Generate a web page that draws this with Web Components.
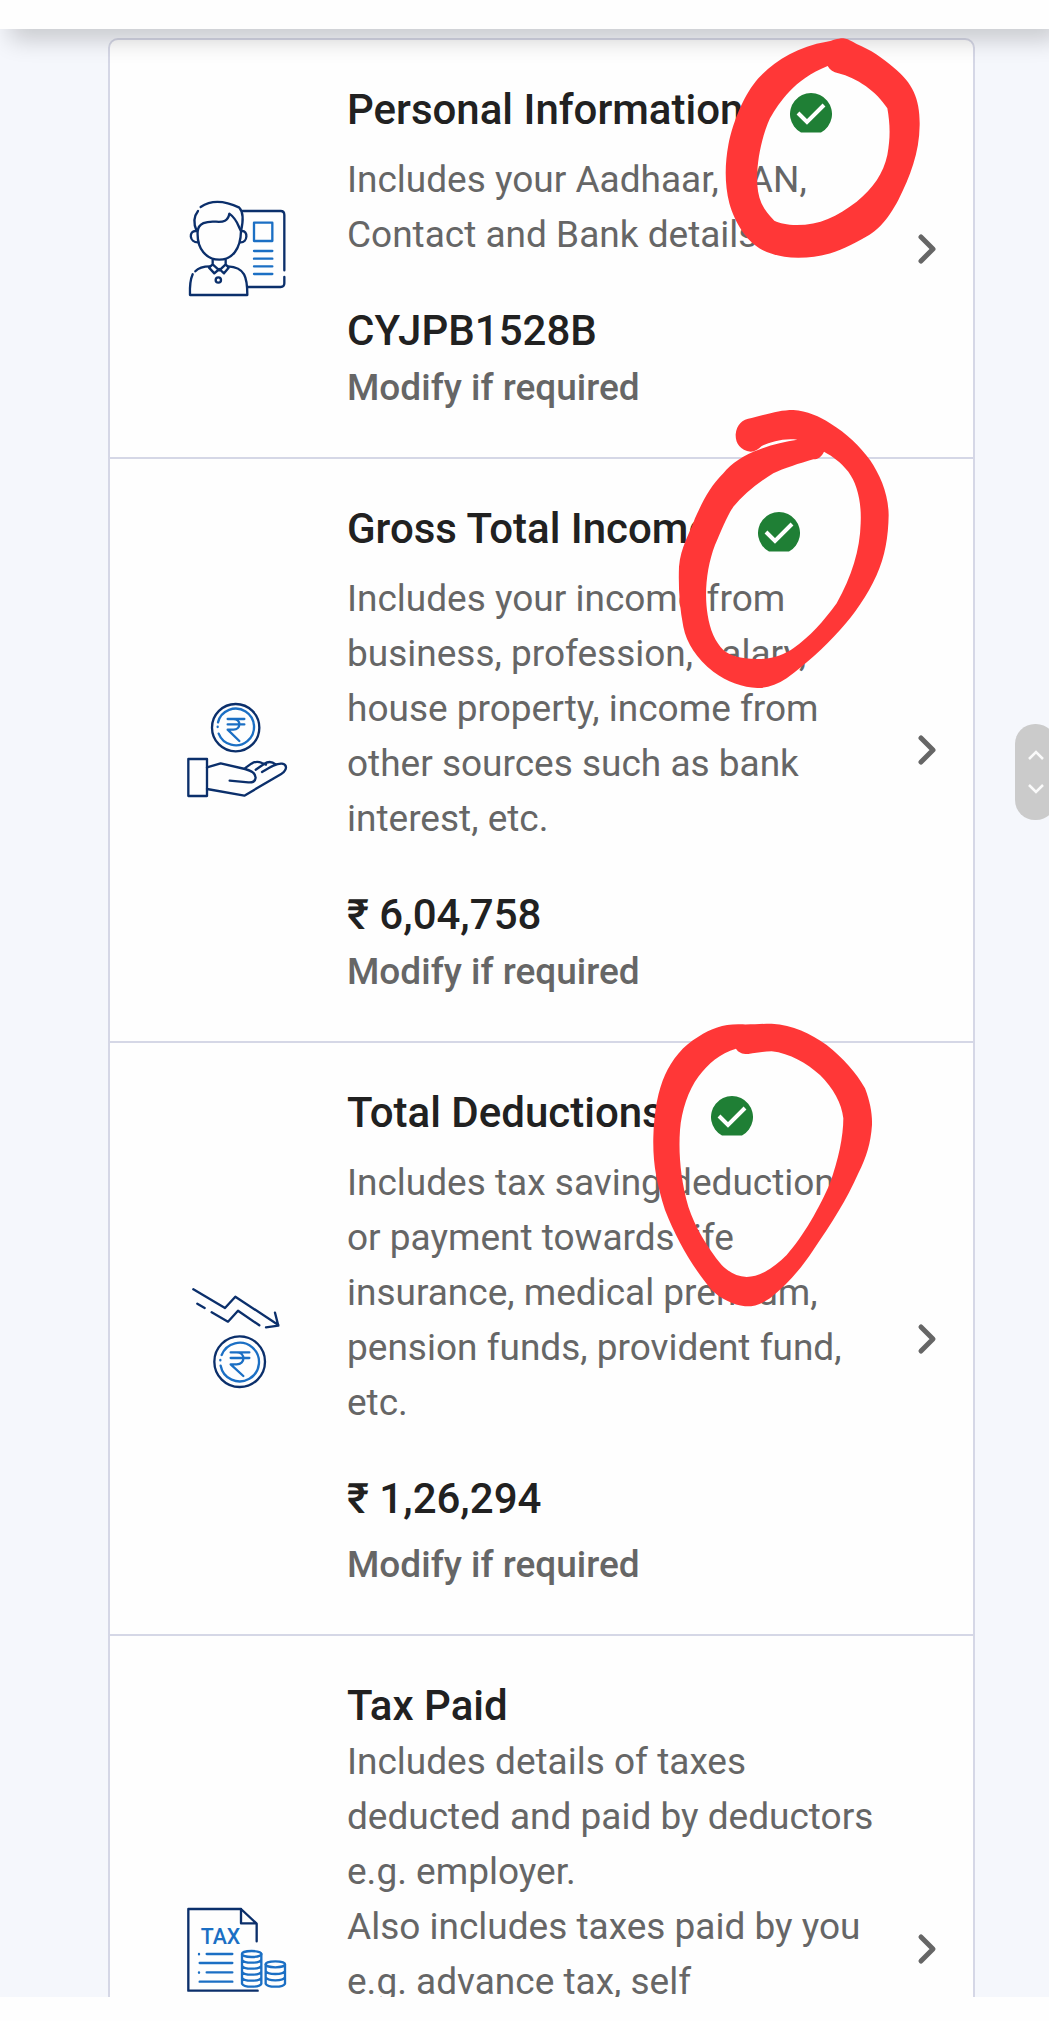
<!DOCTYPE html>
<html lang="en">
<head>
<meta charset="utf-8">
<meta name="viewport" content="width=device-width, initial-scale=1">
<title>Return summary</title>
<style>
  body { margin: 0; background: #fefefe; font-family: Roboto, "Liberation Sans", sans-serif; color: #212121; }
</style>
</head>
<body>
<return-page>
  <summary-card heading="Personal Information" done value="CYJPB1528B" note="Modify if required">
    <person-icon slot="icon"></person-icon>
    Includes your Aadhaar, PAN, Contact and Bank details
  </summary-card>
  <summary-card heading="Gross Total Income" done value="₹ 6,04,758" note="Modify if required">
    <income-icon slot="icon"></income-icon>
    Includes your income from business, profession, salary, house property, income from other sources such as bank interest, etc.
  </summary-card>
  <summary-card heading="Total Deductions" done spaced value="₹ 1,26,294" note="Modify if required">
    <deduction-icon slot="icon"></deduction-icon>
    Includes tax saving deduction<br>or payment towards life insurance, medical premium, pension funds, provident fund, etc.
  </summary-card>
  <summary-card heading="Tax Paid" tall>
    <tax-icon slot="icon"></tax-icon>
    Includes details of taxes deducted and paid by deductors e.g. employer.<br>Also includes taxes paid by you e.g. advance tax, self
  </summary-card>
  <marker-rings slot="overlay"></marker-rings>
  <scroll-pill slot="overlay"></scroll-pill>
</return-page>

<script>
const define = (name, html, setup) => customElements.define(name, class extends HTMLElement {
  constructor() {
    super();
    this.attachShadow({ mode: "open" }).innerHTML = html;
  }
  connectedCallback() { if (setup) setup(this, this.shadowRoot); }
});

const iconStyle = `<style>
  :host { display: block; }
  svg { display: block; width: 100px; height: 100px; overflow: visible; fill: none; stroke: #0b2f6b; stroke-width: 7; stroke-linecap: round; stroke-linejoin: round; }
  .b { stroke: #1b6fc4; }
</style>`;

define("return-page", `<style>
  :host { display: flex; flex-direction: column; height: 100vh; position: relative; overflow: hidden; }
  header { flex: 0 0 29px; background: #fefefe; position: relative; z-index: 2; box-shadow: 10px 10px 24px rgba(0,0,0,.2); }
  main { flex: 1 1 0; min-height: 0; overflow: hidden; background: #f5f7fc; padding: 9px 74px 0 108px; }
  .list { border: 2px solid #d5d7e6; border-radius: 10px; background: #fefefe; box-sizing: border-box; }
  footer { flex: 0 0 24px; background: #fefefe; }
</style>
<header></header>
<main><div class="list"><slot></slot></div></main>
<footer></footer>
<slot name="overlay"></slot>`);

define("summary-card", `<style>
  :host { display: flex; align-items: center; gap: 37px; padding: 42px 36px 42px 77px; border-bottom: 2px solid #d5d7e6; }
  :host([tall]) { box-sizing: border-box; min-height: 626px; border-bottom: 0; }
  .text { flex: 1; min-width: 0; align-self: stretch; margin-left: 23px; }
  .head { display: flex; align-items: flex-end; gap: 47px; margin-bottom: 15px; }
  :host([tall]) .head { margin-bottom: 1px; }
  h2, .value { margin: 0; font-size: 42px; line-height: 55px; font-weight: 500; }
  .desc, .note { margin: 0; font-size: 37px; line-height: 55px; color: #666; }
  .value { margin-top: 41px; }
  .note { font-weight: 500; margin-top: 2px; }
  :host([spaced]) .note { margin-top: 11px; }
  .check { width: 42px; height: 40px; margin-bottom: 4px; display: none; }
  :host([done]) .check { display: block; }
  button { flex: none; width: 20px; height: 32px; padding: 0; border: 0; background: none; cursor: pointer; }
  button svg { display: block; overflow: visible; }
</style>
<slot name="icon"></slot>
<div class="text">
  <div class="head"><h2></h2>
    <svg class="check" viewBox="0 0 42 40" aria-hidden="true"><path d="M11 39.500A21 21 0 1 1 31 39.500Z" fill="#1f7f35"/><path d="M8 20l9 9L34 12" fill="none" stroke="#fff" stroke-width="4"/></svg>
  </div>
  <p class="desc"><slot></slot></p>
</div>
<button type="button"><svg width="20" height="32" viewBox="0 0 20 32"><path d="M4 4l12 12L4 28" fill="none" stroke="#666" stroke-width="5" stroke-linecap="round" stroke-linejoin="round"/></svg></button>`,
(el, root) => {
  root.querySelector("h2").textContent = el.getAttribute("heading");
  root.querySelector("button").setAttribute("aria-label", el.getAttribute("heading"));
  for (const key of ["value", "note"]) {
    if (!el.hasAttribute(key) || root.querySelector("." + key)) continue;
    const p = document.createElement("p");
    p.className = key;
    p.textContent = el.getAttribute(key);
    if (key === "value") p.style.marginBottom = "0";
    root.querySelector(".text").append(p);
  }
});

define("person-icon", iconStyle + `<svg viewBox="51 54 300 300" aria-hidden="true">
  <path d="M217 90H332Q343 90 343 102V268M343 288V307Q343 318 332 318H234"/>
  <path d="M92 78C125 55 165 59 208 80C219 92 220 120 213 150M84 90C70 108 71 130 80 150"/>
  <path d="M83 152C80 205 110 236 148 236S212 205 213 150C204 135 202 115 178 98C174 120 160 124 138 122C110 120 84 126 83 152Z"/>
  <path d="M79 150C55 148 57 185 85 184M215 150C235 148 234 185 211 184"/>
  <path d="M128 236V250L148 268L167 250V236M128 250L117 260L133 277L148 264L162 277L176 260L167 250"/>
  <path d="M120 256C98 256 84 262 76 271M68 280C60 298 59 318 60 342H232C232 290 225 258 174 256"/>
  <circle cx="145" cy="297" r="8"/>
  <g class="b"><rect x="252" y="125" width="55" height="55"/><path d="M252 210H307M252 233H307M252 256H307M252 279H307"/></g>
</svg>`);

define("income-icon", iconStyle + `<svg viewBox="51 31 300 300" aria-hidden="true">
  <circle cx="197" cy="114" r="71"/>
  <g class="b"><path d="M144 98A55 55 0 1 1 146 132M143 111v1"/><path d="M173 88H223M173 104H223M190 88C214 88 214 120 190 120H173L208 154"/></g>
  <rect x="55" y="208" width="56" height="111"/>
  <path d="M111 233L152 221L225 238C245 243 257 253 257 264C256 276 247 279 235 278L179 273M111 298L223 318L335 252C354 238 350 224 336 222C320 220 300 232 276 247M223 237L244 222C255 215 265 215 276 220L288 225M257 240L282 223C295 214 307 216 317 224"/>
</svg>`);

define("deduction-icon", iconStyle + `<svg viewBox="51 60 300 300" aria-hidden="true">
  <path d="M70 61L165 117L196 83L325 168M315 131L325 170L288 175M82 104L104 117M125 130L174 158L204 125L268 169"/>
  <circle cx="209" cy="278" r="76"/>
  <g class="b"><path d="M155 258A58 58 0 1 1 152 290M151 273v1"/><path d="M182 250H238M182 267H238M200 250C227 250 227 286 200 286H182L220 321"/></g>
</svg>`);

define("tax-icon", iconStyle + `<style>text { font: 500 64px Roboto, sans-serif; fill: #1b6fc4; stroke: none; }</style>
<svg viewBox="51 30 300 300" aria-hidden="true">
  <path d="M263 305H55V60H213L260 104V157M213 60V103H259"/>
  <text x="92" y="164">TAX</text>
  <g class="b"><path d="M87 195v1M110 195H187M89 222H187M87 250v1M110 250H187M89 278H187"/>
  <ellipse cx="245" cy="195" rx="29" ry="9"/><path d="M216 195V284Q220 293 245 293T274 284V195M216 212Q220 221 245 221T274 212M216 230Q220 239 245 239T274 230M216 248Q220 257 245 257T274 248M216 266Q220 275 245 275T274 266"/>
  <ellipse cx="316" cy="226" rx="29" ry="9"/><path d="M287 226V284Q291 293 316 293T345 284V226M287 246Q291 255 316 255T345 246M287 265Q291 274 316 274T345 265"/></g>
</svg>`);

define("marker-rings", `<style>
  :host { position: absolute; top: 0; left: 0; z-index: 3; pointer-events: none; }
  svg { display: block; overflow: visible; fill: #ff3737; fill-rule: evenodd; }
</style>
<svg width="1049" height="1400" viewBox="0 0 3147 4200" aria-hidden="true">
  <path transform="translate(2040 90)" d="M490 25C510 28 520 38 530 42C570 58 610 85 640 112C700 160 720 210 719 285C718 370 690 440 655 510C620 575 590 605 545 628C480 665 430 683 355 683C310 683 280 675 247 660C200 635 165 580 148 520C133 460 135 400 145 345C160 270 195 190 235 145C280 95 350 50 440 35C460 32 470 25 490 25ZM443 108C450 120 460 127 475 130C530 143 590 185 622 235C630 280 632 320 622 375C610 430 580 475 530 515C470 560 420 585 350 585C320 584 300 580 283 572C250 540 235 510 232 465C228 400 245 320 270 265C300 215 340 150 443 108Z"/>
  <path transform="translate(1980 1200)" d="M272 155C240 150 226 130 227 103C230 75 245 58 275 54C330 40 360 30 400 30C440 32 480 50 510 70C560 100 600 140 630 180C660 225 685 280 686 345C685 410 675 470 650 525C620 590 585 640 540 690C490 745 440 790 380 835C350 855 320 865 292 864C250 862 200 845 160 815C110 775 80 730 70 680C58 620 55 560 57 500C62 440 90 400 105 355C130 300 150 260 190 220C215 190 250 165 300 148C335 133 375 125 412 119C370 114 335 125 305 138C295 148 285 155 272 155ZM492 155C485 170 475 178 460 178C420 190 370 205 340 220C290 250 250 285 220 320C200 350 185 390 165 435C140 500 132 580 143 645C150 690 165 725 190 750C210 768 240 775 290 777C340 778 370 765 400 745C450 710 490 665 530 610C575 530 600 450 602 370C605 300 590 250 565 215C540 185 520 170 492 155Z"/>
  <path transform="translate(1920 3030)" d="M300 43C340 44 360 41 395 41C460 45 510 70 560 105C610 145 650 190 675 235C690 275 697 310 696 345C692 400 680 440 655 490C620 570 575 640 520 720C480 780 440 825 390 865C360 885 340 890 315 889C280 885 240 865 215 840C160 775 110 690 75 600C50 520 38 460 40 380C42 300 55 240 75 195C95 150 130 105 175 80C215 55 250 42 300 43ZM288 116C295 128 310 133 325 132C350 128 370 124 395 124C450 130 500 160 540 195C580 235 605 280 610 325C610 380 595 450 570 520C540 590 490 680 440 735C400 775 360 800 320 801C290 800 265 785 245 765C200 710 165 650 145 590C122 510 115 430 120 360C125 300 145 240 175 200C205 160 240 130 288 116Z"/>
</svg>`);

define("scroll-pill", `<style>
  :host { position: absolute; top: 724px; right: -7px; z-index: 4; }
  div { display: flex; flex-direction: column; align-items: center; justify-content: center; gap: 24px; width: 41px; height: 96px; border-radius: 20px; background: #cbcbcb; }
  svg { display: block; overflow: visible; fill: none; stroke: #fafafa; stroke-width: 2.500; }
</style>
<div><svg width="16" height="9"><path d="M1 8l7-7 7 7"/></svg><svg width="16" height="9"><path d="M1 1l7 7 7-7"/></svg></div>`);
</script>
</body>
</html>
